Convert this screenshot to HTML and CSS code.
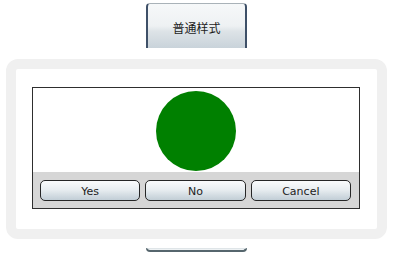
FILE: index.html
```html
<!DOCTYPE html>
<html>
<head>
<meta charset="utf-8">
<link rel="stylesheet" href="styles.css">
</head>
<body>
<div class="page">
  <div class="top-btn"><span>普通样式</span></div>
  <div class="panel">
    <div class="frame">
      <div class="stage"><div class="circle"></div></div>
      <div class="bar">
        <div class="btn">Yes</div>
        <div class="btn">No</div>
        <div class="btn">Cancel</div>
      </div>
    </div>
  </div>
  <div class="peek"></div>
</div>
</body>
</html>
```
FILE: styles.css
```css
html, body {
  margin: 0;
  padding: 0;
  background: #ffffff;
}
.page {
  width: 408px;
  height: 259px;
  display: flex;
  flex-direction: column;
  align-items: flex-start;
  overflow: hidden;
}
.top-btn {
  box-sizing: border-box;
  margin: 3px 0 0 146px;
  width: 101px;
  height: 45px;
  border-left: 2px solid #3e5068;
  border-right: 2px solid #3e5068;
  border-top: 1px solid #a9b2b8;
  border-radius: 4px 4px 0 0;
  background: linear-gradient(#f6f8f9 0%, #eef1f3 50%, #dde3e7 62%, #c9d3da 100%);
  display: flex;
  align-items: center;
  justify-content: center;
  font-family: "Noto Sans CJK SC", sans-serif;
  font-size: 12px;
  color: #1c1c1c;
  padding-top: 2px;
}
.panel {
  box-sizing: border-box;
  margin: 11px 0 0 6px;
  width: 381px;
  height: 180px;
  border: 10px solid #f0f0f0;
  border-radius: 12px;
  background: #ffffff;
  padding: 18px 17px 20px 16px;
}
.frame {
  box-sizing: border-box;
  width: 328px;
  height: 122px;
  border: 1px solid #2e2e2e;
  display: flex;
  flex-direction: column;
}
.stage {
  padding-top: 3px;
  height: 81px;
  display: flex;
  justify-content: center;
}
.circle {
  width: 80px;
  height: 80px;
  border-radius: 50%;
  background: #008000;
}
.bar {
  box-sizing: border-box;
  height: 36px;
  background: #d6d6d6;
  padding: 8px 8px 0 7px;
  display: flex;
  gap: 5px;
  align-items: flex-start;
}
.btn {
  box-sizing: border-box;
  flex: 1;
  height: 21px;
  border: 1px solid #262626;
  border-radius: 5px;
  background: linear-gradient(#fafbfc 0%, #e9eef1 45%, #d3dce2 75%, #c2ced6 100%);
  font-family: "DejaVu Sans", sans-serif;
  font-size: 11px;
  color: #222;
  display: flex;
  align-items: center;
  justify-content: center;
  padding-top: 1px;
}
.peek {
  box-sizing: border-box;
  margin: 9px 0 0 146px;
  width: 101px;
  height: 4px;
  border: 2px solid #56666d;
  border-top: 1px solid #dfe5e8;
  border-radius: 0 0 4px 4px;
  background: #eef2f4;
}
```
